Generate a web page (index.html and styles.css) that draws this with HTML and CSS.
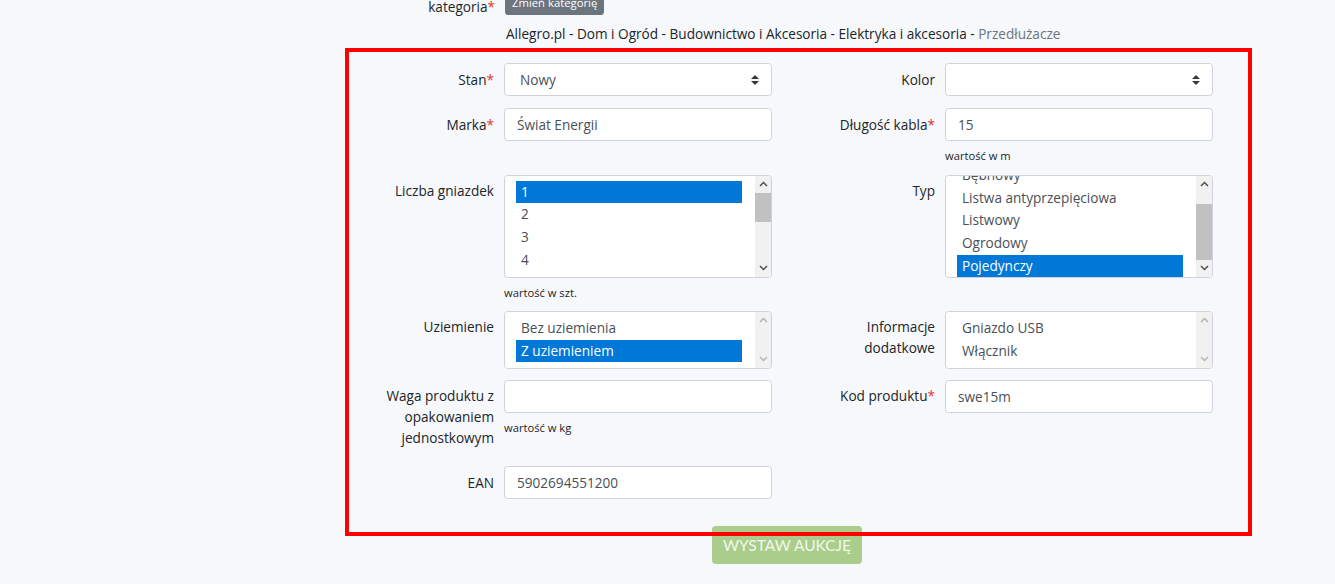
FILE: index.html
```html
<!DOCTYPE html>
<html lang="pl">
<head>
<meta charset="utf-8">
<title>Wystaw aukcję</title>
<link rel="stylesheet" href="styles.css">
</head>
<body>
<div class="page">
  <div class="cat-row">
    <div class="cat-label">kategoria<span class="req">*</span></div>
    <button class="btn-change" type="button">Zmień kategorię</button>
  </div>
  <div class="crumbs">Allegro.pl - Dom i Ogród - Budownictwo i Akcesoria - Elektryka i akcesoria - <span class="muted">Przedłużacze</span></div>

  <div class="params">
    <!-- row 1 -->
    <div class="flabel">Stan<span class="req">*</span></div>
    <div class="ctrl">
      <div class="select"><span>Nowy</span>
        <svg class="caret" width="8" height="10" viewBox="0 0 4 5"><path d="M2 0L0 2h4zm0 5L0 3h4z"/></svg>
      </div>
    </div>
    <div class="flabel right">Kolor</div>
    <div class="ctrl">
      <div class="select"><span></span>
        <svg class="caret" width="8" height="10" viewBox="0 0 4 5"><path d="M2 0L0 2h4zm0 5L0 3h4z"/></svg>
      </div>
    </div>

    <!-- row 2 -->
    <div class="flabel">Marka<span class="req">*</span></div>
    <div class="ctrl"><input class="input" type="text" value="Świat Energii"></div>
    <div class="flabel right">Długość kabla<span class="req">*</span></div>
    <div class="ctrl">
      <input class="input" type="text" value="15">
      <div class="help">wartość w m</div>
    </div>

    <!-- row 3 -->
    <div class="flabel">Liczba gniazdek</div>
    <div class="ctrl">
      <div class="listbox lb4">
        <div class="lb-opts">
          <div class="lb-inner">
            <div class="opt sel">1</div>
            <div class="opt">2</div>
            <div class="opt">3</div>
            <div class="opt">4</div>
          </div>
        </div>
        <div class="sb">
          <div class="sb-btn"><svg width="9" height="6" viewBox="0 0 9 6"><polyline points="1,5 4.5,1.5 8,5"/></svg></div>
          <div class="sb-track"><div class="thumb thumb-top"></div></div>
          <div class="sb-btn"><svg width="9" height="6" viewBox="0 0 9 6"><polyline points="1,1 4.5,4.5 8,1"/></svg></div>
        </div>
      </div>
      <div class="help">wartość w szt.</div>
    </div>
    <div class="flabel right">Typ</div>
    <div class="ctrl">
      <div class="listbox lb4">
        <div class="lb-opts scrolled">
          <div class="lb-inner">
            <div class="opt">Bębnowy</div>
            <div class="opt">Listwa antyprzepięciowa</div>
            <div class="opt">Listwowy</div>
            <div class="opt">Ogrodowy</div>
            <div class="opt sel">Pojedynczy</div>
          </div>
        </div>
        <div class="sb">
          <div class="sb-btn"><svg width="9" height="6" viewBox="0 0 9 6"><polyline points="1,5 4.5,1.5 8,5"/></svg></div>
          <div class="sb-track"><div class="thumb thumb-bottom"></div></div>
          <div class="sb-btn"><svg width="9" height="6" viewBox="0 0 9 6"><polyline points="1,1 4.5,4.5 8,1"/></svg></div>
        </div>
      </div>
    </div>

    <!-- row 4 -->
    <div class="flabel">Uziemienie</div>
    <div class="ctrl">
      <div class="listbox lb2">
        <div class="lb-opts">
          <div class="lb-inner">
            <div class="opt">Bez uziemienia</div>
            <div class="opt sel">Z uziemieniem</div>
          </div>
        </div>
        <div class="sb disabled">
          <div class="sb-btn"><svg width="9" height="6" viewBox="0 0 9 6"><polyline points="1,5 4.5,1.5 8,5"/></svg></div>
          <div class="sb-track"></div>
          <div class="sb-btn"><svg width="9" height="6" viewBox="0 0 9 6"><polyline points="1,1 4.5,4.5 8,1"/></svg></div>
        </div>
      </div>
    </div>
    <div class="flabel right">Informacje dodatkowe</div>
    <div class="ctrl">
      <div class="listbox lb2">
        <div class="lb-opts">
          <div class="lb-inner">
            <div class="opt">Gniazdo USB</div>
            <div class="opt">Włącznik</div>
          </div>
        </div>
        <div class="sb disabled">
          <div class="sb-btn"><svg width="9" height="6" viewBox="0 0 9 6"><polyline points="1,5 4.5,1.5 8,5"/></svg></div>
          <div class="sb-track"></div>
          <div class="sb-btn"><svg width="9" height="6" viewBox="0 0 9 6"><polyline points="1,1 4.5,4.5 8,1"/></svg></div>
        </div>
      </div>
    </div>

    <!-- row 5 -->
    <div class="flabel">Waga produktu z opakowaniem jednostkowym</div>
    <div class="ctrl">
      <input class="input" type="text" value="">
      <div class="help">wartość w kg</div>
    </div>
    <div class="flabel right">Kod produktu<span class="req">*</span></div>
    <div class="ctrl"><input class="input" type="text" value="swe15m"></div>

    <!-- row 6 -->
    <div class="flabel">EAN</div>
    <div class="ctrl"><input class="input" type="text" value="5902694551200"></div>
    <div></div>
    <div></div>
  </div>

  <div class="actions">
    <button class="btn-submit" type="button">Wystaw aukcję</button>
  </div>
</div>
<div class="highlight"></div>
</body>
</html>
```

FILE: styles.css
```css
* { box-sizing: border-box; }

html, body { height: 100%; }

body {
  margin: 0;
  position: relative;
  overflow: hidden;
  background: #f6f8fb;
  color: #212529;
  font-family: "Open Sans", "Noto Sans", "DejaVu Sans", sans-serif;
  font-size: 13.6px;
  line-height: 20.7px;
}

.page {
  padding-left: 349px;
}

.req { color: #e3342f; }
.muted { color: #6c757d; }

/* category row */
.cat-row {
  display: flex;
  align-items: flex-start;
  margin-top: -9px;
}
.cat-label {
  width: 157px;
  padding: 9px 11px 4px 0;
  line-height: 13px;
  text-align: right;
}
.btn-change {
  height: 24px;
  margin-left: -1px;
  padding: 0 7px;
  border: 0;
  border-radius: 3.6px;
  background: #6c757d;
  color: #fff;
  font-family: inherit;
  font-size: 11.3px;
  line-height: 1;
}

.crumbs {
  margin: 6.9px 0 0 157px;
  white-space: nowrap;
}

/* parameter grid */
.params {
  display: grid;
  grid-template-columns: 155px 268px 173px 268px;
  row-gap: 11.3px;
  align-items: start;
  margin-top: 18.8px;
}

.flabel {
  text-align: right;
  padding: 6.5px 10px 6.5px 22px;
}
.flabel.right {
  padding-left: 40px;
}

.input,
.select {
  display: block;
  width: 268px;
  height: 33px;
  margin: 0;
  padding: 0 12px;
  border: 1px solid #ced4da;
  border-radius: 3.6px;
  background: #fff;
  color: #495057;
  font-family: inherit;
  font-size: 13.6px;
  outline: none;
}

.select {
  display: flex;
  align-items: center;
  justify-content: space-between;
  padding: 0 12px 0 15px;
}
.caret { fill: #343a40; display: block; }

.help {
  margin-top: 7px;
  font-size: 11.2px;
  line-height: 15px;
}

/* list boxes */
.listbox {
  display: flex;
  width: 268px;
  border: 1px solid #ced4da;
  border-radius: 3.6px;
  background: #fff;
  overflow: hidden;
}
.lb4 { height: 103px; }
.lb2 { height: 57.6px; }

.lb-opts {
  flex: 1;
  padding: 5px 13px 5px 11px;
  overflow: hidden;
  color: #495057;
}
.lb-opts.scrolled .lb-inner { margin-top: -16.8px; }

.opt {
  height: 22.7px;
  line-height: 22.7px;
  padding-left: 5px;
  white-space: nowrap;
}
.opt.sel {
  background: #0078d7;
  color: #fff;
}

.sb {
  width: 16px;
  display: flex;
  flex-direction: column;
  background: #f1f1f1;
}
.sb-btn {
  height: 17px;
  flex: none;
  display: flex;
  align-items: center;
  justify-content: center;
}
.sb-btn svg polyline {
  fill: none;
  stroke: #505050;
  stroke-width: 1.5;
}
.sb.disabled .sb-btn svg polyline { stroke: #b4b4b4; }
.sb-track {
  flex: 1;
  display: flex;
  flex-direction: column;
}
.thumb { background: #c1c1c1; }
.thumb-top { height: 29px; }
.thumb-bottom { height: 56px; margin-top: auto; }

/* submit */
.actions {
  margin-top: 26.5px;
  padding-left: 363px;
}
.btn-submit {
  width: 150px;
  height: 38px;
  padding: 0;
  border: 0;
  border-radius: 4px;
  background: #aacd8b;
  color: #f1f7ec;
  font-family: "Lato", sans-serif;
  font-size: 15.5px;
  text-transform: uppercase;
}

/* annotation frame drawn over the form */
.highlight {
  position: absolute;
  left: 345px;
  top: 48px;
  width: 907px;
  height: 488px;
  border: 4px solid #ff0000;
  pointer-events: none;
}
```
